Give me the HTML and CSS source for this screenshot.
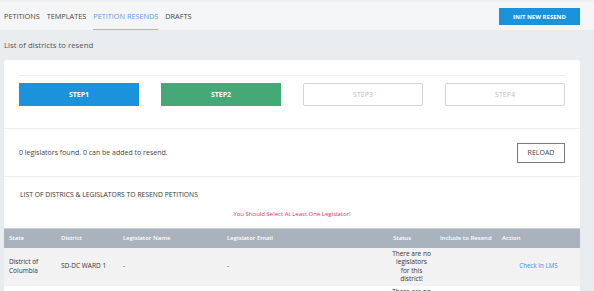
FILE: index.html
```html
<!DOCTYPE html>
<html lang="en">
<head>
<meta charset="UTF-8"/>
<title>Petition Resends</title>
<link rel="stylesheet" href="styles.css">
</head>
<body>
<div class="topbar">
  <nav class="tabs">
    <a class="tab">PETITIONS</a>
    <a class="tab">TEMPLATES</a>
    <a class="tab active">PETITION RESENDS</a>
    <a class="tab">DRAFTS</a>
  </nav>
  <button class="btn-init">INIT NEW RESEND</button>
</div>

<p class="page-title">List of districts to resend</p>

<div class="card">
  <div class="steps-wrap">
    <div class="steps">
      <button class="step step-blue">STEP1</button>
      <button class="step step-green">STEP2</button>
      <button class="step step-off">STEP3</button>
      <button class="step step-off">STEP4</button>
    </div>
  </div>

  <div class="found">
    <span>0 legislators found. 0 can be added to resend.</span>
    <button class="btn-reload">RELOAD</button>
  </div>

  <div class="list">
    <h2>LIST OF DISTRICS &amp; LEGISLATORS TO RESEND PETITIONS</h2>
    <p class="warn">You Should Select At Least One Legislator!</p>
    <table>
      <colgroup>
        <col style="width:52px"><col style="width:62px"><col style="width:104px"><col style="width:166px">
        <col style="width:47px"><col style="width:62px"><col style="width:83px">
      </colgroup>
      <thead>
        <tr><th>State</th><th>District</th><th>Legislator Name</th><th>Legislator Email</th><th>Status</th><th>Include to Resend</th><th>Action</th></tr>
      </thead>
      <tbody>
        <tr class="odd">
          <td>District of Columbia</td>
          <td>SD-DC WARD 1</td>
          <td>-</td>
          <td>-</td>
          <td class="status">There are no legislators for this district!</td>
          <td></td>
          <td class="action"><a>Check In LMS</a></td>
        </tr>
        <tr>
          <td></td>
          <td></td>
          <td></td>
          <td></td>
          <td class="status">There are no legislators for this district!</td>
          <td></td>
          <td class="action"></td>
        </tr>
      </tbody>
    </table>
  </div>
</div>
</body>
</html>
```

FILE: styles.css
```css
*{box-sizing:border-box;margin:0;padding:0}
body{background:#e9ecef;font-family:'Open Sans',sans-serif;color:#444;overflow:hidden}
button{font-family:'Open Sans',sans-serif;cursor:pointer}

.topbar{height:30px;background:#f4f5f7;border-top:2px solid #eef1f4;display:flex;align-items:stretch;justify-content:space-between;padding:0 14px 0 4px}
.tabs{display:flex;gap:7px}
.tab{font-size:7.3px;color:#444;display:flex;align-items:center;padding-top:1px;border-bottom:1px solid transparent}
.tab.active{color:#5aa0dc;border-bottom-color:#8dbde6}
.btn-init{align-self:flex-start;margin-top:6px;width:81px;height:17px;background:#1a93dc;border:none;color:#fff;font-size:6px;font-weight:700}

.page-title{font-size:7.8px;color:#555;padding:10px 4px 0;height:30px}

.card{background:#fff;margin:0 14px 0 4px;border-radius:3px 3px 0 0}
.steps-wrap{padding:15px 15px 0}
.steps{border-top:1px solid #eee;padding:7px 0 22px;display:flex;justify-content:space-between}
.step{width:120px;height:23px;font-size:7px;font-weight:700;color:#fff;border:none}
.step-blue{background:#1a93dc}
.step-green{background:#45a877}
.step-off{background:#fff;border:1px solid #d4d4d4;color:#bbb;font-weight:400;border-radius:2px}

.found{border-top:1px solid #eee;height:48px;display:flex;align-items:center;justify-content:space-between;padding:0 15px;font-size:7px;color:#444}
.btn-reload{width:48px;height:20px;background:#fff;border:1px solid #7a7a7a;font-size:7px;color:#444}

.list{border-top:1px solid #eee}
.list h2{font-size:6.8px;font-weight:400;color:#333;padding:13px 16px 0;height:32px}
.warn{font-size:6px;color:#ee2c55;text-align:center;height:19px;padding-top:1px}

table{width:100%;border-collapse:collapse;table-layout:fixed;font-size:6.5px}
thead tr{background:#a8b3bd}
th{color:#fff;font-weight:600;font-size:6px;white-space:nowrap;text-align:left;height:19px;padding:0 5px;border-top:1px solid #c9d0d6}
td{color:#333;padding:4px 5px;line-height:8.5px;vertical-align:middle}
tr.odd{background:#f2f2f2}
td.status{text-align:center;padding:2px 4px}
td.action{text-align:center;font-size:6.2px}
td.action a{color:#3d8ad4}
```
